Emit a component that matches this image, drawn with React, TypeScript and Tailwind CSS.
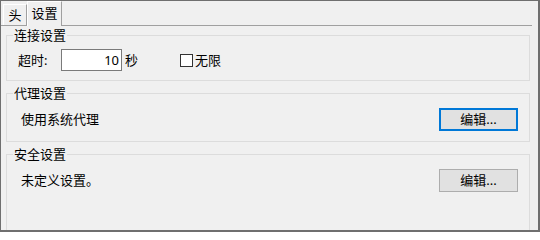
import React from "react";

const FONT = {
  fontFamily: '"Noto Sans", "Noto Sans CJK SC", sans-serif',
};

function GroupBox({
  title,
  className = "",
  children,
}: {
  title: string;
  className?: string;
  children: React.ReactNode;
}) {
  return (
    <fieldset
      className={`ml-[5px] w-[524px] border border-[#dcdcdc] ${className}`}
    >
      <legend className="ml-[6px] px-[1px] text-[13px] leading-[16px] text-black">
        {title}
      </legend>
      {children}
    </fieldset>
  );
}

function EditButton({ focused = false }: { focused?: boolean }) {
  return (
    <button
      type="button"
      className={`flex h-[23px] w-[79px] shrink-0 items-center justify-center bg-[#e1e1e1] text-[13px] leading-none text-black ${
        focused ? "border-2 border-[#0078d7]" : "border border-[#adadad]"
      }`}
    >
      编辑...
    </button>
  );
}

export default function App() {
  return (
    <div
      className="h-[232px] w-[540px] overflow-hidden border-t border-l border-r-2 border-b-2 border-[#6f6f6f] bg-[#f0f0f0] text-black"
      style={FONT}
    >
      {/* tab strip */}
      <div className="flex h-[25px] w-[531px] items-end border-b border-[#a0a0a0] pl-[2px]">
        <div className="mb-0 flex h-[21px] w-[24px] items-center justify-center border-l border-t border-r border-l-white border-t-white border-r-[#a0a0a0] text-[13px] leading-none">
          头
        </div>
        <div className="-mb-px flex h-[25px] w-[35px] items-center justify-center border-l border-t border-r border-l-white border-t-white border-r-[#a0a0a0] bg-[#f0f0f0] pb-[2px] text-[13px] leading-none">
          设置
        </div>
      </div>

      {/* panel */}
      <div className="pt-px">
        <GroupBox title="连接设置">
          <div className="flex items-center pl-[11px] pt-[6px] pb-[9px] text-[13px] leading-none">
            <span className="w-[43px]">超时:</span>
            <div className="flex h-[22px] w-[61px] items-center justify-end border border-[#7a7a7a] bg-white pr-[2px]">
              10
            </div>
            <span className="ml-[3px]">秒</span>
            <label className="ml-[42px] flex items-center">
              <span className="h-[13px] w-[13px] border border-[#333333] bg-white" />
              <span className="ml-[2px]">无限</span>
            </label>
          </div>
        </GroupBox>

        <GroupBox title="代理设置" className="mt-[4px]">
          <div className="flex items-center justify-between pl-[14px] pr-[11px] pt-[7px] pb-[10px] text-[13px] leading-none">
            <span>使用系统代理</span>
            <EditButton focused />
          </div>
        </GroupBox>

        <GroupBox title="安全设置" className="mt-[4px] h-[100px]">
          <div className="flex items-center justify-between pl-[14px] pr-[11px] pt-[7px] text-[13px] leading-none">
            <span>未定义设置。</span>
            <EditButton />
          </div>
        </GroupBox>
      </div>
    </div>
  );
}
